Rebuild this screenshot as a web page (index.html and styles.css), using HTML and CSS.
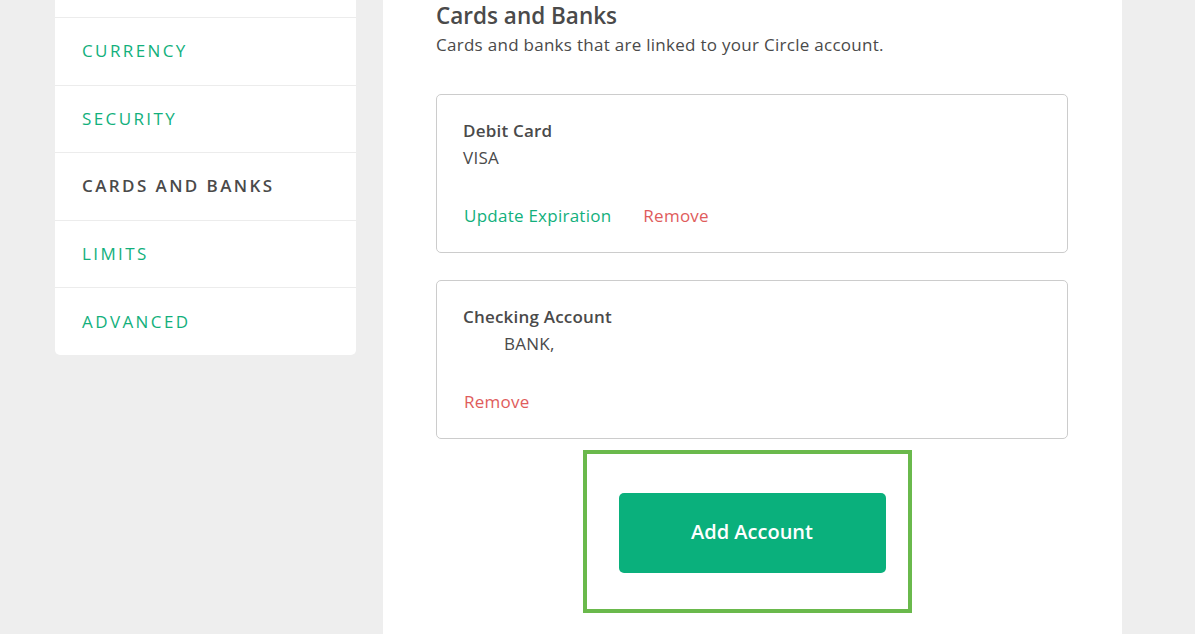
FILE: index.html
```html
<!DOCTYPE html>
<html>
<head>
<meta charset="utf-8">
<link rel="stylesheet" href="styles.css">
</head>
<body>
<div class="layout">
  <nav class="sidebar">
    <div class="nav-item nav-top"></div>
    <div class="nav-item">CURRENCY</div>
    <div class="nav-item">SECURITY</div>
    <div class="nav-item active">CARDS AND BANKS</div>
    <div class="nav-item">LIMITS</div>
    <div class="nav-item">ADVANCED</div>
  </nav>
  <main class="panel">
    <h1 class="title">Cards and Banks</h1>
    <p class="subtitle">Cards and banks that are linked to your Circle account.</p>
    <div class="card">
      <div class="card-name">Debit Card</div>
      <div class="card-detail">VISA</div>
      <div class="card-actions">
        <span class="link green">Update Expiration</span>
        <span class="link red">Remove</span>
      </div>
    </div>
    <div class="card">
      <div class="card-name">Checking Account</div>
      <div class="card-detail indent">BANK,</div>
      <div class="card-actions">
        <span class="link red">Remove</span>
      </div>
    </div>
    <div class="add-row">
      <div class="add-wrap">
        <button class="add-btn">Add Account</button>
        <div class="highlight"></div>
      </div>
    </div>
  </main>
</div>
</body>
</html>
```

FILE: styles.css
```css
html, body {
  margin: 0;
  padding: 0;
  background: #eeeeee;
  font-family: "Open Sans", "Liberation Sans", sans-serif;
  color: #4a4a4a;
  overflow: hidden;
}
.layout {
  display: flex;
  align-items: flex-start;
  padding-left: 55px;
  gap: 27px;
  height: 634px;
}
.sidebar {
  width: 301px;
  background: #fff;
  border-radius: 0 0 5px 5px;
  display: flex;
  flex-direction: column;
}
.nav-item {
  height: 66.6px;
  border-top: 1px solid #ececec;
  display: flex;
  align-items: center;
  padding-left: 27px;
  padding-bottom: 1px;
  box-sizing: border-box;
  font-size: 17px;
  letter-spacing: 2.4px;
  color: #12b07c;
}
.nav-item + .nav-item {
  height: 67.6px;
}
.nav-item.nav-top {
  height: 17px;
  border-top: none;
}
.nav-item.active {
  color: #4a4a4a;
  font-weight: 600;
  letter-spacing: 2.4px;
}
.panel {
  width: 686px;
  height: 634px;
  background: #fff;
  padding: 0 0 0 53px;
  box-sizing: content-box;
}
.title {
  margin: 0;
  padding-top: 1px;
  font-size: 22.5px;
  font-weight: 600;
  line-height: 30px;
  color: #4a4a4a;
}
.subtitle {
  margin: 1px 0 0 0;
  font-size: 17px;
  letter-spacing: 0.28px;
  line-height: 26px;
  color: #4a4a4a;
}
.card {
  width: 632px;
  height: 159px;
  border: 1px solid #cccccc;
  border-radius: 5px;
  margin-bottom: 27px;
  padding: 24px 0 0 26px;
  box-sizing: border-box;
}
.subtitle + .card {
  margin-top: 36px;
}
.card-name {
  font-size: 17px;
  letter-spacing: 0.2px;
  font-weight: 600;
  line-height: 24px;
}
.card-detail {
  font-size: 17px;
  letter-spacing: 0.25px;
  line-height: 24px;
  margin-top: 3px;
}
.card-detail.indent {
  padding-left: 41px;
}
.card-actions {
  display: flex;
  gap: 32px;
  margin-top: 34px;
  padding-left: 1px;
  font-size: 17px;
  letter-spacing: 0.25px;
  line-height: 24px;
}
.link.green { color: #12b07c; }
.link.red { color: #e05c5c; }
.add-row {
  width: 632px;
  display: flex;
  justify-content: center;
  margin-top: 54px;
}
.add-wrap {
  position: relative;
}
.add-btn {
  width: 267px;
  height: 80px;
  padding: 0 0 4px 0;
  border: none;
  border-radius: 5px;
  background: #0ab07c;
  color: #fff;
  font-family: "Open Sans", "Liberation Sans", sans-serif;
  font-size: 20px;
  font-weight: 600;
  display: block;
}
.highlight {
  position: absolute;
  left: -36px;
  right: -26px;
  top: -43px;
  bottom: -40px;
  border: 4px solid #6ab94c;
  pointer-events: none;
}
```
